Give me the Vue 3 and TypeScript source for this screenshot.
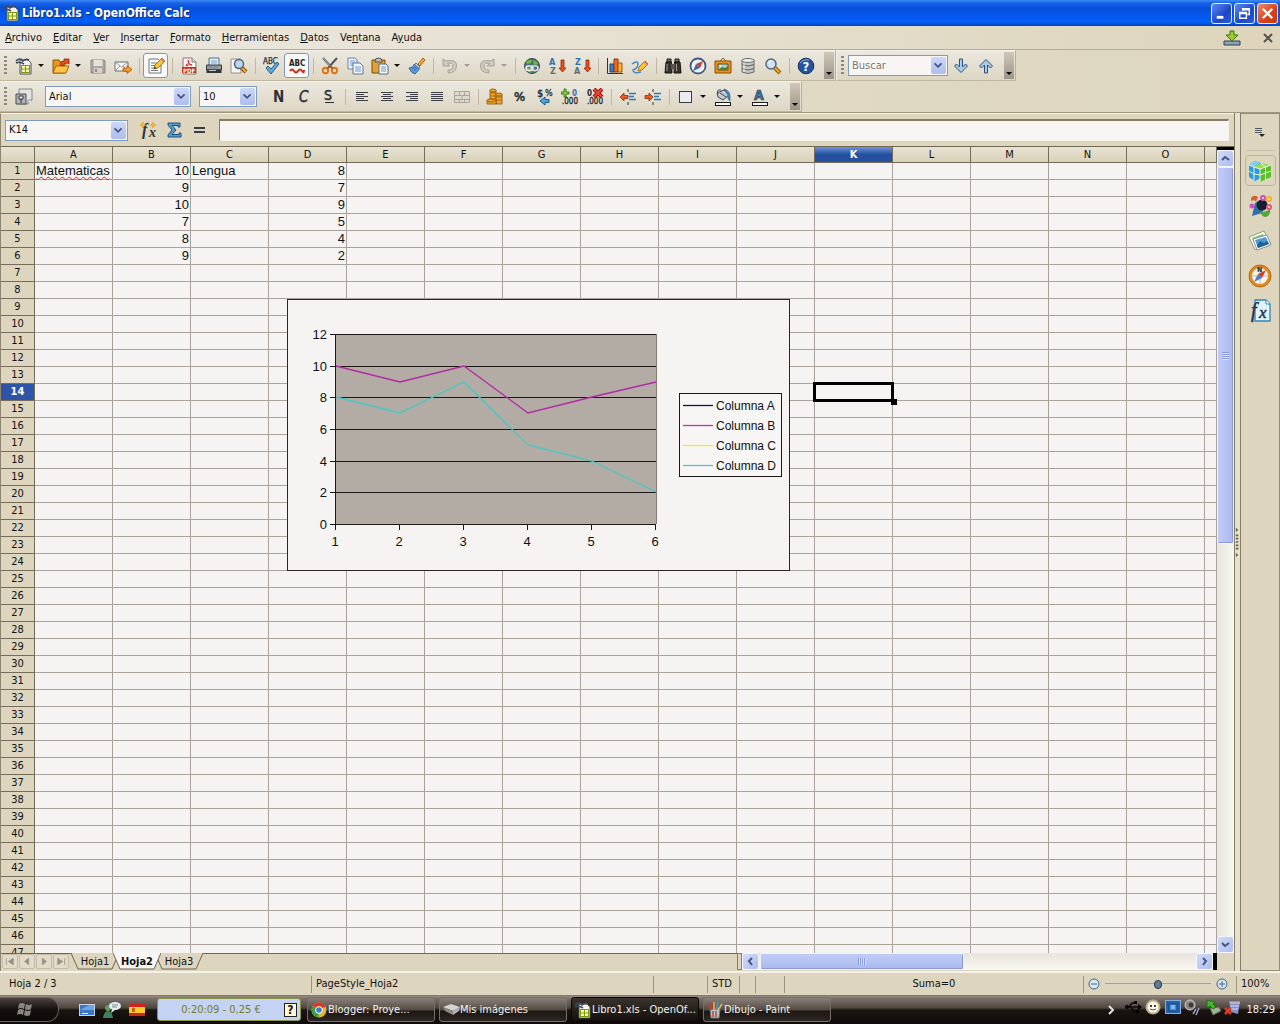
<script setup lang="ts">
import { ref } from 'vue'

interface Tool {
  kind: 'icon' | 'menu' | 'sep'
  icon?: string
  label?: string
  on?: boolean
  off?: boolean
}

const icon = (name: string, label: string, extra: Partial<Tool> = {}): Tool => ({ kind: 'icon', icon: name, label, ...extra })
const menu = (label: string, off = false): Tool => ({ kind: 'menu', label, off })
const sep: Tool = { kind: 'sep' }

const sans = 'font-family="DejaVu Sans Condensed, sans-serif"'
const calcDoc =
  '<path d="M5 3h8l3 3v11H5z" fill="#f4f4f0" stroke="#4b4f55"/><path d="M1 4q4-4 7 0q3-3 6-1M1 6q4-2 8 1" fill="none" stroke="#3f4b5c" stroke-width="1.6"/><rect x="6.500" y="8.500" width="8" height="7" fill="#f5fbb0" stroke="#7f9a10"/><path d="M10.500 8v8M6 12h9" stroke="#7f9a10"/>'
const doc = '<path d="M2 2h9l3 3v11H2z" fill="#fbfbf8" stroke="#6d7683"/>'
const lens =
  '<path d="M10 10l6 6" stroke="#8a5b10" stroke-width="4"/><path d="M10.500 10.500l5 5" stroke="#f2a520" stroke-width="2"/><circle cx="7" cy="7" r="5" fill="#cfe3f6" stroke="#51687f" stroke-width="1.500"/><path d="M4 7q0-3 3-3" stroke="#fff" fill="none"/>'
const lines = (d: string) => `<path d="${d}" stroke="#3c4044" stroke-width="1" fill="none"/>`
const arrowDown = '<path d="M13 3h3v8h2l-3.500 4-3.500-4h2z" fill="#e8501c" stroke="#8c2808" stroke-width=".8"/>'
const blueArrow = 'M7.500 2h3v8l3-3 2 2-6.500 6.500L2.500 9l2-2 3 3z'

const art: Record<string, string> = {
  calc: calcDoc,
  open: '<path d="M1 3h6l1 2h5v11H1z" fill="#e59a12" stroke="#8d5206"/><path d="M1 16l3-7h13l-3 7z" fill="#fdc445" stroke="#a7650b"/><path d="M8 8q0-4 4-4V2h5v5l-2-1q-4 0-4 3z" fill="#e5501e" stroke="#8f2a08" stroke-width=".8"/>',
  save: '<path d="M2 3h13l1 1v12H2z" fill="#aaa6a0" stroke="#8e8a84"/><path d="M4.500 3h9v6h-9z" fill="#e4e1da"/><path d="M5 11h8v5H5z" fill="#d5d1ca"/><path d="M7 12v3" stroke="#8e8a84" stroke-width="2"/>',
  mail: '<path d="M1 5h13v9H1z" fill="#f5f4f0" stroke="#6a7078"/><path d="M1 5l6.500 5L14 5M1 14l5-5M14 14l-5-5" fill="none" stroke="#7c848e" stroke-width=".8"/><path d="M9 11h4V8.500l5 4-5 4V14H9z" fill="#f59b28" stroke="#a4540a" stroke-width=".8"/>',
  edit: doc + '<path d="M4 6h6M4 8.500h5M4 11h4M4 13.500h7" stroke="#6e7c8b"/><path d="M7 12l1-4 7-7 3 3-7 7z" fill="#fbc535" stroke="#8a6008" stroke-width=".8"/><path d="M13.500 2.500L15 1l3 3-1.500 1.500z" fill="#e87884"/><path d="M7 12l.7-2.500 1.800 1.800z" fill="#333"/>',
  pdf: '<path d="M3 1h9l4 4v12H3z" fill="#f8f4f2" stroke="#7f7a78"/><path d="M12 1v4h4" fill="#ddd" stroke="#7f7a78"/><path d="M6 8q3-1 3-4-1-2-1 0 1 4 4 4-3-1-6 1z" stroke="#cf2e2e" fill="none"/><rect x="2" y="10" width="14" height="6" fill="#c62828"/><text x="3" y="15.500" font-size="6" font-weight="bold" fill="#fff" ' + sans + '>PDF</text>',
  print: '<path d="M4 1h10v8H4z" fill="#dfeefa" stroke="#54708c"/><path d="M6 4h6M6 6h6" stroke="#7fa3c4"/><path d="M1.500 8h15v5h-15z" fill="#8d939a" stroke="#3a3f45"/><path d="M1.500 12.500h15v3.500h-15z" fill="#33363b"/><path d="M4 13.500h7" stroke="#c5c9cc"/><path d="M13 10.500h2" stroke="#7be03a" stroke-width="1.500"/>',
  preview: '<path d="M1 2h10v14H1z" fill="#f5f4f1" stroke="#98928a"/><path d="M11 10l5 5" stroke="#805010" stroke-width="4"/><path d="M11 10l5 5" stroke="#f4ac28" stroke-width="2"/><circle cx="9" cy="7" r="4.500" fill="#bcd4ec" stroke="#4f677f" stroke-width="1.500"/>',
  spell: '<text x="0" y="7" font-size="8" fill="#33373c" stroke="#33373c" stroke-width=".3" ' + sans + '>ABC</text><path d="M3 11l2-2 3 3 6-7 2 2-8 10z" fill="#5ea9de" stroke="#1f547f" stroke-width=".9"/>',
  autospell: '<text x="1" y="9" font-size="8" font-weight="bold" fill="#222" ' + sans + '>ABC</text><path d="M2 14q2-3 4 0t4 0 4 0 2-1" fill="none" stroke="#d4281c" stroke-width="2"/>',
  cut: '<path d="M2 1l9 10M16 1L7 11" stroke="#4d5560" stroke-width="2"/><path d="M2 1l8 9" stroke="#cfd3d8" stroke-width=".8"/><circle cx="4.500" cy="13.500" r="2.700" fill="none" stroke="#e0751a" stroke-width="2"/><circle cx="13.500" cy="13.500" r="2.700" fill="none" stroke="#e0751a" stroke-width="2"/><path d="M6 12l3-3 3 3" fill="none" stroke="#b8590c" stroke-width="1.500"/>',
  copy: '<path d="M2 1h7l2 2v9H2z" fill="#e8f1fa" stroke="#6b86a5"/><path d="M4 4h5M4 6h5M4 8h5" stroke="#6f9bd0"/><path d="M7 6h7l3 3v8H7z" fill="#f2f7fc" stroke="#5b7797"/><path d="M9 10h6M9 12h6M9 14h6" stroke="#6f9bd0"/>',
  paste: '<path d="M1 3h13v13H1z" fill="#e3a033" stroke="#7d4c08"/><path d="M4 4q0-3 3.500-3T11 4v1H4z" fill="#b9bdc0" stroke="#4f5256"/><path d="M8 7h7l2 2v8H8z" fill="#f1f6fb" stroke="#5b6f86"/><path d="M10 10h5M10 12h5M10 14h5" stroke="#7b9bc2"/>',
  brush: '<path d="M10 7l5-6 2 2-5 6z" fill="#f4a928" stroke="#8d5808" stroke-width=".8"/><path d="M8 6l4 4-2 2-4-4z" fill="#c9dcf0" stroke="#3a5c85" stroke-width=".8"/><path d="M6.500 7l5 5L7 17q-4-1-6-6 4 0 5.500-4z" fill="#5b9fe0" stroke="#234e84" stroke-width=".8"/><path d="M4 12l4-2M6 14l3-3" stroke="#234e84" stroke-width=".7"/>',
  undo: '<path d="M2 2v7h7L6.500 6.500Q12 5 12 9t-5 4v3q8 0 8.500-7T5 4z" fill="#cfcbc2" stroke="#a7a298"/>',
  redo: '<path d="M16 2v7H9l2.500-2.500Q6 5 6 9t5 4v3Q3 16 2.500 9T13 4z" fill="#cfcbc2" stroke="#a7a298"/>',
  link: '<circle cx="9" cy="9" r="7.500" fill="#456f86" stroke="#3b4c50"/><path d="M3 5q3-3 6-2l-1 3-4 1zM10 3q4 1 5 4l-4 1zM3 10l4 1 1 5q-4-1-5-6zM12 13l3-2q-1 3-4 5z" fill="#73b83c"/><rect x="3" y="9" width="7" height="4.500" rx="2.200" fill="none" stroke="#f1f1f1" stroke-width="1.600"/><rect x="8" y="9" width="7" height="4.500" rx="2.200" fill="none" stroke="#dcdcdc" stroke-width="1.600"/>',
  sortaz: '<text x="1" y="8" font-size="9" font-weight="bold" fill="#2b74b0" ' + sans + '>A</text><text x="2" y="17" font-size="9" font-weight="bold" fill="#686c70" ' + sans + '>Z</text>' + arrowDown,
  sortza: '<text x="2" y="8" font-size="9" font-weight="bold" fill="#2b74b0" ' + sans + '>Z</text><text x="1" y="17" font-size="9" font-weight="bold" fill="#686c70" ' + sans + '>A</text>' + arrowDown,
  chart: '<path d="M1.500 1v15.500H17" stroke="#333" fill="none"/><path d="M4 7h4v8H4z" fill="#3b80c4" stroke="#1d4572"/><path d="M8 2h4v13H8z" fill="#ee6a22" stroke="#8c3208"/><path d="M12 6h4v9h-4z" fill="#f9b23a" stroke="#975a0a"/>',
  draw: '<path d="M1 7q6-4 6 0T2 13q0 4 8 2" stroke="#4a86c8" stroke-width="1.500" fill="none"/><path d="M7 14l1-4 6-6 3 3-6 6z" fill="#fbc535" stroke="#8a6008" stroke-width=".8"/><path d="M13 5l1-1 3 3-1 1z" fill="#e06a6e"/>',
  find: '<path d="M3 2h4v3H3zM11 2h4v3h-4z" fill="#77706a" stroke="#1f1c1a"/><path d="M2 5h5.500l.5 11H1zM10.500 5H16l1 11h-7z" fill="#37322e" stroke="#16130f"/><path d="M7 7h4v5H7z" fill="#5a534d"/><path d="M3 7v7M12.500 7v7" stroke="#a59b90"/>',
  compass: '<circle cx="9" cy="9" r="7.500" fill="#eef3f8" stroke="#45597a" stroke-width="1.800"/><path d="M14 4l-3 7-4-4z" fill="#d9382a"/><path d="M4 14l3-7 4 4z" fill="#3a6db0"/>',
  gallery: '<path d="M5 5l4-4 4 4" fill="none" stroke="#7c5a22"/><path d="M1 4h16v12H1z" fill="#e5941e" stroke="#8c4d06"/><path d="M4 7h10v6H4z" fill="#9cd3ec" stroke="#774206"/><path d="M4 13l4-3 3 1 3-2v4z" fill="#3c8a2c"/><circle cx="6.500" cy="9" r="1" fill="#fff38a"/>',
  data: '<path d="M3 3v12q6 3 12 0V3z" fill="#c5c5c3" stroke="#6c6c6a"/><ellipse cx="9" cy="3.500" rx="6" ry="2" fill="#ededeb" stroke="#6c6c6a"/><path d="M3 7.500q6 3 12 0M3 11.500q6 3 12 0" fill="none" stroke="#5f5f5d"/><path d="M5 6v9" stroke="#f4f4f2"/>',
  zoom: lens,
  help: '<circle cx="9" cy="9" r="7.800" fill="#27549c" stroke="#142e66"/><path d="M3 6q3-4 9-3" stroke="#8fb1e4" fill="none"/><text x="5.500" y="14" font-size="13" font-weight="bold" fill="#fff" ' + sans + '>?</text>',
  styles: '<path d="M4 1h13v11l-4 4H4z" fill="#e5e4e2" stroke="#85868a"/><path d="M13 16v-4h4" fill="#fff" stroke="#85868a"/><path d="M1 6h10v10H1z" fill="#aeb1b5" stroke="#4b4f55"/><path d="M4 8h4v3H4zM6 11v4" fill="#f2f2f2" stroke="#33363b"/>',
  bold: '<text x="3" y="14" font-size="15" font-weight="bold" fill="#2c2f33" ' + sans + '>N</text>',
  italic: '<text x="4" y="14" font-size="15" font-style="italic" fill="#2c2f33" stroke="#2c2f33" stroke-width=".4" ' + sans + '>C</text>',
  under: '<text x="4" y="12" font-size="14" fill="#2c2f33" stroke="#2c2f33" stroke-width=".5" ' + sans + '>S</text><path d="M5 14.500h9" stroke="#2c2f33"/>',
  left: lines('M3 4.500h12M3 6.500h8M3 8.500h12M3 10.500h8M3 12.500h12'),
  center: lines('M3 4.500h12M5 6.500h8M3 8.500h12M5 10.500h8M3 12.500h12'),
  right: lines('M3 4.500h12M7 6.500h8M3 8.500h12M7 10.500h8M3 12.500h12'),
  justify: lines('M3 4.500h12M3 6.500h12M3 8.500h12M3 10.500h12M3 12.500h12'),
  merge: '<path d="M1.500 3.500h15v11h-15zM1 7.500h16M1 11.500h16M6.500 3v4M11.500 3v4M6.500 11v4M11.500 11v4M9 7v4" fill="#dedad0" stroke="#aaa59a"/>',
  coins: '<g fill="#f0a62a" stroke="#87500a" stroke-width=".8"><path d="M4 2h6v9H4z"/><ellipse cx="7" cy="2.500" rx="3" ry="1.500"/><path d="M10 6h6v10h-6z"/><ellipse cx="13" cy="6.500" rx="3" ry="1.500"/><path d="M1 12h9v4H1z"/><ellipse cx="5" cy="12.500" rx="4" ry="1.500"/></g><path d="M4 5h6M4 8h6M10 9h6M10 12h6" stroke="#87500a" stroke-width=".7"/>',
  percent: '<text x="3" y="13" font-size="13" fill="#303338" stroke="#303338" stroke-width=".6" ' + sans + '>%</text>',
  currency: '<text x="1" y="9" font-size="10" font-weight="bold" fill="#303338" ' + sans + '>$</text><text x="9" y="8" font-size="9" fill="#303338" stroke="#303338" stroke-width=".3" ' + sans + '>%</text><path d="M13 11.500H9V9l-5 4 5 4v-2.500h4z" fill="#4fa3dd" stroke="#1d4f80" stroke-width=".9"/>',
  adddec: '<path d="M3 1h2v3h3v2H5v3H3V6H0V4h3z" fill="#8bd43a" stroke="#2e7a0c" stroke-width=".9"/><text x="11" y="8" font-size="8" font-weight="bold" fill="#3a6fb8" ' + sans + '>0</text><text x="1" y="16" font-size="8" fill="#26292d" stroke="#26292d" stroke-width=".3" ' + sans + '>.000</text>',
  deldec: '<text x="1" y="8" font-size="8" font-weight="bold" fill="#26292d" ' + sans + '>0</text><text x="1" y="16" font-size="8" fill="#26292d" stroke="#26292d" stroke-width=".3" ' + sans + '>.000</text><path d="M8 1l8 8M16 1l-8 8" stroke="#921812" stroke-width="4"/><path d="M8 1l8 8M16 1l-8 8" stroke="#ec4438" stroke-width="2"/>',
  outdent: '<path d="M9 1v3M9 14v3" stroke="#333"/><path d="M10 5.500h7M10 8.500h5M10 11.500h7" stroke="#2e7bb8" stroke-width="1.500"/><path d="M9 7.500H5V5L1 9l4 4v-2.500h4z" fill="#ef5a20" stroke="#8c2808" stroke-width=".8"/>',
  indent: '<path d="M9 1v3M9 14v3" stroke="#333"/><path d="M10 5.500h7M10 8.500h5M10 11.500h7" stroke="#2e7bb8" stroke-width="1.500"/><path d="M1 7.500h4V5l4 4-4 4v-2.500H1z" fill="#ef5a20" stroke="#8c2808" stroke-width=".8"/>',
  border: '<rect x="2.500" y="3.500" width="12" height="11" fill="#e9ebf0" stroke="#3a3d42"/>',
  fill: '<path d="M3 5l7-3 5 5-6 5-5-3z" fill="#c2cbd3" stroke="#3d464f"/><path d="M4 6q-2-5 3-4M6 5l6 4" fill="none" stroke="#3d464f"/><path d="M10 1q7 1 6 12-3-2-2-6z" fill="#4590c8" stroke="#23608e" stroke-width=".7"/><rect x="1.500" y="14.500" width="15" height="3" fill="#fff" stroke="#1c1c1c"/>',
  fontcolor: '<text x="3" y="12" font-size="14" font-weight="bold" fill="#43749c" stroke="#223f58" stroke-width=".7" ' + sans + '>A</text><rect x="1.500" y="14.500" width="15" height="3" fill="#fff" stroke="#1c1c1c"/>',
  down: '<path d="' + blueArrow + '" fill="#a9cbe8" stroke="#2a4f78"/>',
  up: '<path transform="rotate(180 9 9)" d="' + blueArrow + '" fill="#a9cbe8" stroke="#2a4f78"/>',
  fx: '<text x="2" y="14" font-size="16" font-style="italic" font-weight="bold" fill="#2f3438" font-family="Liberation Serif, serif">f</text><text x="9" y="16" font-size="14" font-style="italic" font-weight="bold" fill="#2f3438" font-family="Liberation Serif, serif">x</text><path d="M3 1l1 2 2 1-2 1-1 2-1-2-2-1 2-1zM13 1l1 2 2 1-2 1-1 2-1-2-2-1 2-1zM8 0v2" fill="#f7b42c" stroke="#d98d10" stroke-width=".4"/>',
  sum: '<path d="M3 2h12v4h-2V4.500H7l4 4.500-4 4.500h7V12h2v4H3v-2l4-5-4-5z" fill="#4e9fd6" stroke="#1c456e" stroke-width=".9"/>',
  equals: '<path d="M4 7h11M4 11h11" stroke="#3a3d40" stroke-width="2"/>',
  update: '<path d="M1 12h16v4H1z" fill="#8ba3b8" stroke="#2f4151"/><path d="M7 2h4v4h4l-6 6-6-6h4z" fill="#9ccc2c" stroke="#3f7408"/>',
  desktop: '<rect x="1.500" y="3.500" width="15" height="11" fill="#3f77c8" stroke="#c8d4e4"/><path d="M2 9l9-5h5v5z" fill="#6fa2e4"/><path d="M4 12.500h6" stroke="#e8eef6"/>',
  talk: '<circle cx="5" cy="7" r="3" fill="#629c5c"/><path d="M0 17q1-7 5-7t5 7z" fill="#3f8060"/><ellipse cx="12" cy="5" rx="6" ry="4" fill="#e8ecf0"/><path d="M9 8l-1 4 4-3z" fill="#e8ecf0"/><path d="M9 4h6M9 6h5" stroke="#7b8791"/>',
  spain: '<path d="M1 3h16v12H1z" fill="#d4221c"/><path d="M1 6h16v6H1z" fill="#fbc92c"/><path d="M4 7h3v4H4z" fill="#c46a20"/>',
  chrome: '<circle cx="9" cy="9" r="7.500" fill="#e4b820"/><path d="M9 9L2.500 5.200A7.500 7.500 0 0 1 15.500 5.500z" fill="#d83a28"/><path d="M9 9l-6.500-3.800A7.500 7.500 0 0 0 8.500 16.500z" fill="#3f9e45"/><circle cx="9" cy="9" r="3.800" fill="#f4f4f4"/><circle cx="9" cy="9" r="2.800" fill="#3c7bd0"/>',
  drive: '<path d="M1 6l8-3 9 3-7 4z" fill="#d6d4d0"/><path d="M1 6l10 4v4L3 10z" fill="#8b8783"/><path d="M11 10l7-4-1 4-6 4z" fill="#b4b0ac"/>',
  paint: '<path d="M4 8h10l-1 9H5z" fill="#b5c3cc" stroke="#6a747c"/><path d="M6 9L3 2" stroke="#d43c28" stroke-width="2"/><path d="M8 9V1" stroke="#e89a28" stroke-width="2"/><path d="M10 9l2-8" stroke="#4a94d4" stroke-width="2"/><path d="M12 9l4-6" stroke="#d8b060" stroke-width="2"/><path d="M7 10v6M10 10v6" stroke="#b84830" stroke-width="1.500"/>',
  usb: '<path d="M2 8h13M5 8l3-4h3M7 8l3 5h3" stroke="#0a0908" stroke-width="1.500" fill="none"/><circle cx="3" cy="8" r="2"/><path d="M14 5l4 3-4 3zM10 2h3v3h-3zM12 11h3v3h-3z"/>',
  monkey: '<circle cx="9" cy="8" r="7.500" fill="#b9b08a"/><circle cx="9" cy="8" r="5.500" fill="#fbf7ec"/><circle cx="7" cy="7" r="1"/><circle cx="11" cy="7" r="1"/><path d="M6 10q3 2 6 0" stroke="#555" fill="none"/>',
  bluetool: '<rect x="1.500" y="1.500" width="15" height="13" fill="#2562ad" stroke="#87aedc"/><path d="M5 5h8v7H5z" fill="#3f8bdb" stroke="#123f7c"/><path d="M7 7h4M7 9h4" stroke="#cde4fa"/>',
  sound: '<circle cx="6" cy="6" r="5" fill="#8b8986" stroke="#d0cecb"/><circle cx="7" cy="6" r="2.500" fill="#3d3b39"/><path d="M12 10l-3 5M15 9l-3 7" stroke="#9b9cc8" stroke-width="1.500"/>',
  eject: '<path d="M6 9l9-1 2 4-8 4z" fill="#a6b09d" stroke="#5b6454"/><path d="M3 1l8 2-2 2 3 3-3 2-3-3-3 2z" fill="#3fb728" stroke="#166a0c" stroke-width=".8"/>',
  network: '<path d="M5 2h11l-2 13-7-2z" fill="#8a91c4"/><path d="M6 4h10M6 7h9M7 10h7" stroke="#d3d7f2"/><path d="M1 9l6 6M7 9l-6 6" stroke="#e23c28" stroke-width="2.500"/>',
  props:
    '<path d="M1 6l6-4 6 2v15l-6 3-6-4z" fill="#2b9cdc"/><path d="M12 10l11-4v12l-11 5z" fill="#5bbf2c"/><path d="M1 6l6-4 5 2-6 4z" fill="#7fd0f4"/><path d="M6 8l7-4 10 2-11 4z" fill="#9ade4c"/><path d="M1 12l5 3 6 1 11-4M6 8v13M12 10v13M17.500 8v13M1 6l5 2 6 2 11-4M13 4l4 4" stroke="#e9f7e0" fill="none"/>',
  stylist:
    '<path d="M4 22l3-13q7-5 11 1l-4 9z" fill="#2f6fae"/><circle cx="14" cy="11" r="5.500" fill="#15202c"/><path d="M12 18q5 1 10-3 1 6-4 8-4 0-6-5z" fill="#57a53c"/><path d="M3 4q3-4 7-1l-2 5q-1-3-5-1z" fill="#d8622c"/><g fill="#cf4fc0"><circle cx="15" cy="4" r="3"/><circle cx="4" cy="12" r="2.500"/></g><circle cx="21" cy="5" r="3" fill="#f6ac2c"/><circle cx="21" cy="13" r="3" fill="#e3508c"/><g fill="#fff2a0"><circle cx="15" cy="4" r="1"/><circle cx="21" cy="5" r="1"/><circle cx="21" cy="13" r="1"/></g>',
  pictures:
    '<path d="M1 8l15-6 6 12-15 7z" fill="#fbfbf6" stroke="#8da07c"/><path d="M4 9l11-4 4 8-11 5z" fill="#7fc26c"/><path d="M5 10l14-4 4 10-14 5z" fill="#fff" stroke="#8a9298"/><path d="M7 11l11-3 3 7-11 4z" fill="#4f9ad4"/><path d="M9 16l3-4 4 2 3-2 2 3-11 4z" fill="#255f94"/>',
  navigator:
    '<circle cx="12" cy="12" r="9.500" fill="#f4f3ee" stroke="#e28a1a" stroke-width="3"/><circle cx="12" cy="12" r="11" fill="none" stroke="#a65c0c" stroke-width=".8"/><path d="M12 4v16M4 12h16" stroke="#9aa8b8" stroke-width=".7"/><path d="M18 6l-4 8-4-4z" fill="#d23a2c"/><path d="M6 18l4-8 4 4z" fill="#4c7fc0"/><text x="9" y="8" font-size="7" font-weight="bold" fill="#222" ' + sans + '>N</text>',
  functions:
    '<path d="M7 1h11l4 4v17H7z" fill="#e2f2fb" stroke="#2d86b8" stroke-width="1.300"/><path d="M18 1v4h4" fill="#fff" stroke="#2d86b8"/><text x="3" y="18" font-size="20" font-style="italic" fill="#22384c" stroke="#22384c" stroke-width=".5" font-family="Liberation Serif, serif">f</text><text x="11" y="19" font-size="17" font-style="italic" fill="#22384c" stroke="#22384c" stroke-width=".5" font-family="Liberation Serif, serif">x</text>',
}

const menus: [string, string, string][] = [
  ['', 'A', 'rchivo'],
  ['', 'E', 'ditar'],
  ['', 'V', 'er'],
  ['', 'I', 'nsertar'],
  ['', 'F', 'ormato'],
  ['', 'H', 'erramientas'],
  ['', 'D', 'atos'],
  ['Ve', 'n', 'tana'],
  ['A', 'y', 'uda'],
]

const standard: Tool[] = [
  icon('calc', 'Nuevo'), menu('Nuevo'), icon('open', 'Abrir'), menu('Abrir'), icon('save', 'Guardar', { off: true }), icon('mail', 'Enviar'), sep,
  icon('edit', 'Editar archivo', { on: true }), sep,
  icon('pdf', 'Exportar a PDF'), icon('print', 'Imprimir'), icon('preview', 'Vista preliminar'), sep,
  icon('spell', 'Ortografía'), icon('autospell', 'Revisión automática', { on: true }), sep,
  icon('cut', 'Cortar'), icon('copy', 'Copiar'), icon('paste', 'Pegar'), menu('Pegar'), icon('brush', 'Copiar formato'), sep,
  icon('undo', 'Deshacer', { off: true }), menu('Deshacer', true), icon('redo', 'Restaurar', { off: true }), menu('Restaurar', true), sep,
  icon('link', 'Hiperenlace'), icon('sortaz', 'Orden ascendente'), icon('sortza', 'Orden descendente'), sep,
  icon('chart', 'Gráfico'), icon('draw', 'Dibujo'), sep,
  icon('find', 'Buscar y reemplazar'), icon('compass', 'Navegador'), icon('gallery', 'Galería'), icon('data', 'Fuentes de datos'), icon('zoom', 'Zoom'), sep,
  icon('help', 'Ayuda'),
]

const format: Tool[] = [
  icon('bold', 'Negrita'), icon('italic', 'Cursiva'), icon('under', 'Subrayado'), sep,
  icon('left', 'Izquierda'), icon('center', 'Centrado'), icon('right', 'Derecha'), icon('justify', 'Justificado'), icon('merge', 'Combinar', { off: true }), sep,
  icon('coins', 'Moneda'), icon('percent', 'Porcentaje'), icon('currency', 'Predeterminado'), icon('adddec', 'Añadir decimal'), icon('deldec', 'Eliminar decimal'), sep,
  icon('outdent', 'Reducir sangría'), icon('indent', 'Aumentar sangría'), sep,
  icon('border', 'Bordes'), menu('Bordes'), icon('fill', 'Color de fondo'), menu('Color de fondo'), icon('fontcolor', 'Color de fuente'), menu('Color de fuente'),
]

const columns = 'ABCDEFGHIJKLMNO'.split('')
const rowCount = 47
const cells: Record<string, string> = { A1: 'Matematicas', C1: 'Lengua' }
const mathGrades = [10, 9, 10, 7, 8, 9]
const languageGrades = [8, 7, 9, 5, 4, 2]
mathGrades.forEach((v, i) => (cells[`B${i + 1}`] = String(v)))
languageGrades.forEach((v, i) => (cells[`D${i + 1}`] = String(v)))
const isNumber = (key: string) => /^\d+$/.test(cells[key] ?? '')

const px = (i: number) => 50 + i * 64
const py = (v: number) => Math.round(225 - (v * 190) / 12)
const points = (values: number[]) => values.map((v, i) => `${px(i)},${py(v)}`).join(' ')
const ticks = [0, 2, 4, 6, 8, 10, 12]
const legend = [
  { name: 'Columna A', color: '#101050' },
  { name: 'Columna B', color: '#c030b8' },
  { name: 'Columna C', color: '#ece83c' },
  { name: 'Columna D', color: '#40d0d0' },
]

const sheetNav = ['M3.500 4v8M12 4v8L6 8z', 'M10 4v8L5 8z', 'M6 4v8l5-4z', 'M4 4v8l6-4zM12.500 4v8']
const sheets = ['Hoja1', 'Hoja2', 'Hoja3']
const activeSheet = ref('Hoja2')
const zoomLevel = ref(50)
const panels = [
  ['props', 'Propiedades'],
  ['stylist', 'Estilos'],
  ['pictures', 'Galería'],
  ['navigator', 'Navegador'],
  ['functions', 'Funciones'],
]
const tasks = [
  ['chrome', 'Blogger: Proye...'],
  ['drive', 'Mis imágenes'],
  ['calc', 'Libro1.xls - OpenOf...'],
  ['paint', 'Dibujo - Paint'],
]
const tray = ['usb', 'monkey', 'bluetool', 'sound', 'eject', 'network']
</script>

<template>
  <div class="screen">
    <header class="title">
      <svg class="ic" viewBox="0 0 18 18" v-html="art.calc" />
      <h1>Libro1.xls - OpenOffice Calc</h1>
      <button class="win" aria-label="Minimizar"><svg viewBox="0 0 20 20"><path d="M5 14h7" stroke="#fff" stroke-width="3" /></svg></button>
      <button class="win" aria-label="Restaurar"><svg viewBox="0 0 20 20"><path d="M8 7V5h7v6h-2M8 6h7M5 9h7v6H5zM5 10h7" fill="none" stroke="#fff" stroke-width="1.5" /></svg></button>
      <button class="win close" aria-label="Cerrar"><svg viewBox="0 0 20 20"><path d="M5 5l10 10M15 5L5 15" stroke="#fff" stroke-width="2.5" /></svg></button>
    </header>

    <nav class="menubar">
      <a v-for="m in menus" :key="m[1]" href="#">{{ m[0] }}<u>{{ m[1] }}</u>{{ m[2] }}</a>
      <button class="tool update" aria-label="Actualizaciones"><svg class="ic" viewBox="0 0 18 18" v-html="art.update" /></button>
      <button class="tool" aria-label="Cerrar documento"><svg class="ic" viewBox="0 0 18 18"><path d="M5 5l8 8M13 5l-8 8" stroke="#55524c" stroke-width="2" /></svg></button>
    </nav>

    <div class="bars">
      <div class="bar">
        <i class="grip" />
        <template v-for="(t, i) in standard" :key="i">
          <i v-if="t.kind === 'sep'" class="sep" />
          <button v-else-if="t.kind === 'menu'" class="drop" :class="{ off: t.off }" :aria-label="t.label + ', opciones'"><i /></button>
          <button v-else class="tool" :class="{ on: t.on }" :aria-label="t.label"><svg class="ic" viewBox="0 0 18 18" v-html="art[t.icon!]" /></button>
        </template>
        <button class="more" aria-label="Más botones"><i /></button>
      </div>
      <div class="bar">
        <i class="grip" />
        <div class="combo search">
          <input type="text" placeholder="Buscar" aria-label="Buscar" />
          <svg viewBox="0 0 17 17"><path d="M4 6l4 4 4-4" /></svg>
        </div>
        <button class="tool" aria-label="Siguiente"><svg class="ic" viewBox="0 0 18 18" v-html="art.down" /></button>
        <button class="tool" aria-label="Anterior"><svg class="ic" viewBox="0 0 18 18" v-html="art.up" /></button>
        <button class="more" aria-label="Más botones de búsqueda"><i /></button>
      </div>
    </div>

    <div class="bars second">
      <div class="bar">
        <i class="grip" />
        <button class="tool" aria-label="Estilo y formato"><svg class="ic" viewBox="0 0 18 18" v-html="art.styles" /></button>
        <div class="combo font">
          <select aria-label="Fuente"><option>Arial</option></select>
          <svg viewBox="0 0 17 17"><path d="M4 6l4 4 4-4" /></svg>
        </div>
        <div class="combo size">
          <select aria-label="Tamaño"><option>10</option></select>
          <svg viewBox="0 0 17 17"><path d="M4 6l4 4 4-4" /></svg>
        </div>
        <template v-for="(t, i) in format" :key="i">
          <i v-if="t.kind === 'sep'" class="sep" />
          <button v-else-if="t.kind === 'menu'" class="drop" :aria-label="t.label + ', opciones'"><i /></button>
          <button v-else class="tool" :aria-label="t.label"><svg class="ic" viewBox="0 0 18 18" v-html="art[t.icon!]" /></button>
        </template>
        <button class="more" aria-label="Más formato"><i /></button>
      </div>
    </div>

    <div class="work">
      <main class="sheet">
        <div class="formula">
          <div class="combo name">
            <select aria-label="Celda"><option>K14</option></select>
            <svg viewBox="0 0 17 17"><path d="M4 6l4 4 4-4" /></svg>
          </div>
          <button class="tool" aria-label="Asistente de funciones"><svg class="ic" viewBox="0 0 18 18" v-html="art.fx" /></button>
          <button class="tool" aria-label="Suma"><svg class="ic" viewBox="0 0 18 18" v-html="art.sum" /></button>
          <button class="tool" aria-label="Función"><svg class="ic" viewBox="0 0 18 18" v-html="art.equals" /></button>
          <input type="text" class="entry" aria-label="Línea de entrada" />
        </div>

        <div class="body">
          <div class="grid">
            <table>
              <colgroup>
                <col class="rowcol" />
                <col v-for="c in columns" :key="c" class="datacol" />
                <col />
              </colgroup>
              <thead>
                <tr>
                  <th />
                  <th v-for="c in columns" :key="c" scope="col" :class="{ current: c === 'K' }">{{ c }}</th>
                  <th />
                </tr>
              </thead>
              <tbody>
                <tr v-for="r in rowCount" :key="r">
                  <th scope="row" :class="{ current: r === 14 }">{{ r }}</th>
                  <td v-for="c in columns" :key="c" :class="{ num: isNumber(c + r), cursor: c + r === 'K14', typo: c + r === 'A1' }"><span v-if="cells[c + r]">{{ cells[c + r] }}</span></td>
                  <td />
                </tr>
              </tbody>
            </table>

            <svg class="chart" viewBox="0 0 504 272" role="img" aria-label="Gráfico de líneas">
              <rect x="1.5" y="0.5" width="502" height="271" fill="#f5f4f2" stroke="#2e2624" />
              <rect x="50" y="35" width="320" height="190" fill="#b3aca5" />
              <path d="M370.5 35v190" stroke="#847c76" />
              <g stroke="#1c1816">
                <path v-for="t in ticks" :key="t" :d="`M44 ${py(t) + 0.5}h326`" />
                <path v-for="n in 6" :key="n" :d="`M${px(n - 1) - 0.5} 225v6`" />
                <path d="M49.5 35v190" />
              </g>
              <polyline :points="points(mathGrades)" fill="none" stroke="#b429a4" stroke-width="1.3" />
              <polyline :points="points(languageGrades)" fill="none" stroke="#44c8c8" stroke-width="1.3" />
              <text v-for="t in ticks" :key="'y' + t" x="41" :y="py(t) + 5" text-anchor="end">{{ t }}</text>
              <text v-for="n in 6" :key="'x' + n" :x="px(n - 1) - 1" y="247" text-anchor="middle">{{ n }}</text>
              <rect x="393.5" y="94.5" width="102" height="83" fill="#f7f6f4" stroke="#1c1816" />
              <g v-for="(l, i) in legend" :key="l.name">
                <path :d="`M397 ${106.5 + i * 20}h30`" :stroke="l.color" stroke-width="1.3" />
                <text class="key" x="430" :y="111 + i * 20">{{ l.name }}</text>
              </g>
            </svg>
          </div>

          <div class="vscroll">
            <i class="split" />
            <button aria-label="Subir"><svg viewBox="0 0 15 15"><path d="M4 9l3-3 4 3" /></svg></button>
            <i class="thumb" />
            <i class="rest" />
            <button aria-label="Bajar"><svg viewBox="0 0 15 15"><path d="M4 6l3 3 4-3" /></svg></button>
          </div>
        </div>

        <div class="tabs">
          <div class="tabarea">
            <button v-for="(d, i) in sheetNav" :key="i" class="nav" :aria-label="'Desplazar hojas ' + (i + 1)"><svg viewBox="0 0 16 16"><path :d="d" fill="#999286" stroke="#999286" /></svg></button>
            <div class="names">
              <button v-for="s in sheets" :key="s" class="tab" :class="{ active: s === activeSheet }" @click="activeSheet = s">
                <svg viewBox="0 0 48 17" preserveAspectRatio="none"><path d="M0 0l7 16h34l7-16" /></svg>
                <span>{{ s }}</span>
              </button>
            </div>
          </div>
          <div class="hscroll">
            <i class="handle" />
            <button aria-label="Izquierda"><svg viewBox="0 0 15 15"><path d="M9 4L6 7l3 4" /></svg></button>
            <i class="thumb" />
            <i class="rest" />
            <button aria-label="Derecha"><svg viewBox="0 0 15 15"><path d="M6 4l3 3-3 4" /></svg></button>
            <i class="split" />
          </div>
          <i class="corner" />
        </div>
      </main>

      <div class="splitter"><svg viewBox="0 0 6 36"><path d="M1 1v5l3-2.500zM1 31v5l3-2.500zM1 9h3v2H1zM1 13h3v2H1zM1 17h3v2H1zM1 21h3v2H1zM1 25h3v2H1z" fill="#68604e" /></svg></div>

      <aside class="side">
        <button class="sidemenu" aria-label="Configuración"><svg class="ic" viewBox="0 0 18 18"><path d="M4 5.500h7M4 7.500h7M4 9.500h7" stroke="#505a66" /><path d="M8 11h6l-3 3z" fill="#222" /></svg></button>
        <button v-for="(p, i) in panels" :key="p[0]" class="panel" :class="{ on: i === 0 }" :aria-label="p[1]"><svg viewBox="0 0 24 24" v-html="art[p[0]]" /></button>
      </aside>
    </div>

    <footer class="status">
      <span class="s1">Hoja 2 / 3</span>
      <span class="s2">PageStyle_Hoja2</span>
      <span class="s3" />
      <span class="s4">STD</span>
      <span class="s5" />
      <span class="s6" />
      <span class="s7">Suma=0</span>
      <span class="s8">
        <button class="round" aria-label="Reducir"><svg viewBox="0 0 12 12"><circle cx="6" cy="6" r="5" /><path d="M3 6h6" /></svg></button>
        <input v-model="zoomLevel" type="range" min="0" max="100" aria-label="Escala" />
        <button class="round" aria-label="Ampliar"><svg viewBox="0 0 12 12"><circle cx="6" cy="6" r="5" /><path d="M3 6h6M6 3v6" /></svg></button>
      </span>
      <span class="s9">100%</span>
    </footer>

    <div class="taskbar">
      <button class="start" aria-label="Inicio"><svg viewBox="0 0 20 18"><path d="M4 3q3-2 6 0l-1 5q-3-2-6 0zM11 3q3 2 6 0l-1 5q-3 2-6 0zM3 9q3-2 6 0l-1 5q-3-2-6 0zM10 9q3 2 6 0l-1 5q-3 2-6 0z" fill="#8a8580" /></svg></button>
      <div class="quick">
        <button v-for="q in ['desktop', 'talk', 'spain']" :key="q" class="tool" :aria-label="q"><svg class="ic" viewBox="0 0 18 18" v-html="art[q]" /></button>
      </div>
      <div class="timer"><span>0:20:09 - 0,25 €</span><b>?</b></div>
      <button v-for="(t, i) in tasks" :key="t[1]" class="task" :class="{ active: i === 2 }"><svg class="ic" viewBox="0 0 18 18" v-html="art[t[0]]" /><span>{{ t[1] }}</span></button>
      <div class="tray">
        <button class="chev" aria-label="Mostrar iconos"><svg viewBox="0 0 8 10"><path d="M1 1l4 4-4 4" fill="none" stroke="#e4e2de" stroke-width="2" /></svg></button>
        <svg v-for="t in tray" :key="t" class="ic" viewBox="0 0 18 18" v-html="art[t]" />
        <time>18:29</time>
      </div>
    </div>
  </div>
</template>

<style>
body {
  background: #dcd4bc;
}
</style>

<style scoped>
* {
  box-sizing: border-box;
}
.screen {
  display: flex;
  flex-direction: column;
  height: 100vh;
  overflow: hidden;
  background: #ddd5be;
  color: #111;
  font: 11px/14px "DejaVu Sans Condensed", "DejaVu Sans", sans-serif;
}
button,
input,
select {
  margin: 0;
  padding: 0;
  border: 0;
  border-radius: 0;
  background: none;
  color: inherit;
  font: inherit;
  outline: 0;
}
i {
  display: block;
}
.ic {
  display: block;
  width: 18px;
  height: 18px;
  flex: none;
}
.title {
  display: flex;
  align-items: center;
  gap: 2px;
  flex: none;
  height: 26px;
  padding: 0 2px 0 2px;
  background: linear-gradient(#3a8cf6 0, #1a62e8 3px, #0550da 8px, #0558ee 16px, #0560f8 22px, #0342b8 26px);
}
.title h1 {
  flex: 1;
  margin: 0;
  color: #fff;
  font-size: 12px;
  line-height: 16px;
  text-shadow: 1px 1px 1px #0a2a80;
}
.win {
  width: 21px;
  height: 21px;
  border: 1px solid #e6ecfa;
  border-radius: 3px;
  background: linear-gradient(135deg, #5c8af0, #1c46c8 60%, #2a5ce0);
}
.win svg {
  display: block;
}
.win.close {
  background: linear-gradient(135deg, #ee8a68, #d64018 60%, #c83c14);
}
.menubar {
  display: flex;
  align-items: center;
  gap: 11px;
  flex: none;
  height: 24px;
  padding: 0 0 0 5px;
  border-bottom: 1px solid #b5ab95;
  background: linear-gradient(90deg, #ebe8df, #e6e0d0 50%, #ddd4bb);
}
.menubar a {
  color: #111;
  text-decoration: none;
}
.menubar .update {
  margin-left: auto;
}
.bars {
  display: flex;
  flex: none;
  height: 31px;
  background: linear-gradient(90deg, #e4decb, #ded6be);
}
.bars.second {
  height: 32px;
  border-bottom: 1px solid #a0977f;
}
.bar {
  display: flex;
  align-items: center;
  padding: 0 1px 0 4px;
  border-top: 1px solid #f3f0e8;
  border-right: 1px solid #b9b099;
  border-bottom: 1px solid #c0b7a1;
  background: linear-gradient(#ebe8df, #ddd6c3);
}
.bar + .bar {
  border-left: 1px solid #f3f0e8;
}
.grip {
  width: 3px;
  height: 20px;
  margin-right: 4px;
  background: repeating-linear-gradient(#8f8878 0 2px, transparent 2px 4px);
}
.tool {
  display: flex;
  align-items: center;
  justify-content: center;
  flex: none;
  width: 25px;
  height: 25px;
}
.tool.on {
  border: 1px solid #7f97b8;
  border-radius: 3px;
  background: #f8f8f6;
}
.drop {
  flex: none;
  width: 12px;
  height: 25px;
}
.drop i {
  width: 6px;
  margin-left: 2px;
  border: 3px solid transparent;
  border-top-color: #111;
  border-bottom: 0;
}
.drop.off i {
  border-top-color: #a49e90;
}
.sep {
  flex: none;
  width: 1px;
  height: 16px;
  margin: 0 3px 0 4px;
  background: #c3b5a2;
}
.more {
  align-self: stretch;
  width: 10px;
  margin: 1px 0 1px 6px;
  padding: 16px 0 0 2px;
  background: linear-gradient(#cfc8b8, #9c9486);
}
.more i {
  width: 6px;
  border: 3px solid transparent;
  border-top-color: #000;
  border-bottom: 0;
}
.combo {
  display: flex;
  align-items: center;
  height: 21px;
  padding: 1px;
  border: 1px solid #7f9db9;
  background: #f7f6f4;
}
.combo select,
.combo input {
  flex: 1;
  min-width: 0;
  height: 17px;
  padding-left: 2px;
  appearance: none;
}
.combo input::placeholder {
  color: #7c7872;
  opacity: 1;
}
.combo svg {
  flex: none;
  width: 15px;
  height: 17px;
  border-radius: 2px;
  background: linear-gradient(#ccd6f8, #aebdf0);
}
.combo path,
.vscroll path,
.hscroll path {
  fill: none;
  stroke: #44547c;
  stroke-width: 2;
}
.combo.font {
  width: 146px;
  margin: 0 8px 0 9px;
}
.combo.size {
  width: 58px;
  margin-right: 9px;
}
.combo.search {
  width: 100px;
}
.work {
  display: flex;
  flex: 1;
  min-height: 0;
}
.sheet {
  display: flex;
  flex-direction: column;
  flex: 1;
  min-width: 0;
  border-top: 1px solid #f4f1e8;
  border-left: 1px solid #8d8571;
}
.formula {
  display: flex;
  align-items: center;
  flex: none;
  height: 32px;
  padding: 0 5px 0 4px;
}
.combo.name {
  width: 123px;
  margin-right: 8px;
}
.entry {
  flex: 1;
  height: 22px;
  margin-left: 8px;
  border: 1px solid #f4f2ea;
  border-top: 2px solid #857c66;
  border-left-color: #857c66;
  background: #f6f5f3;
}
.body {
  display: flex;
  flex: 1;
  min-height: 0;
  border-top: 1px solid #6f6754;
}
.grid {
  position: relative;
  flex: 1;
  min-width: 0;
  overflow: hidden;
  background: #f5f4f2;
}
table {
  width: 100%;
  table-layout: fixed;
  border-collapse: separate;
  border-spacing: 0;
}
.rowcol {
  width: 34px;
}
.datacol {
  width: 78px;
}
th,
td {
  height: 17px;
  padding: 0 1px;
  border-right: 1px solid #aaa39c;
  border-bottom: 1px solid #aaa39c;
  line-height: 14px;
  white-space: nowrap;
}
th {
  border-color: #746b58;
  background: #ddd5be;
  font-weight: normal;
}
thead th {
  height: 16px;
  background: linear-gradient(#e8e3d4, #d8d0b8);
}
th.current {
  background: #2c55a8;
  color: #fff;
  font-weight: bold;
}
thead th.current {
  background: linear-gradient(#6e94d8, #24509f 50%);
}
td {
  font: 13px/14px "Liberation Sans", Arial, sans-serif;
}
td.num {
  text-align: right;
}
td.typo span {
  text-decoration: underline wavy #d02c24 1px;
  text-underline-offset: 1px;
}
td.cursor {
  position: relative;
}
td.cursor::before {
  content: "";
  position: absolute;
  inset: -2px;
  border: 3px solid #000;
}
td.cursor::after {
  content: "";
  position: absolute;
  right: -5px;
  bottom: -5px;
  width: 6px;
  height: 6px;
  background: #000;
}
.chart {
  position: absolute;
  left: 285px;
  top: 152px;
  width: 504px;
  height: 272px;
}
.chart text {
  fill: #111;
  font: 13px "Liberation Sans", Arial, sans-serif;
}
.chart .key {
  font-size: 12px;
}
.vscroll {
  display: flex;
  flex-direction: column;
  flex: none;
  width: 17px;
  background: linear-gradient(90deg, #e6e4da, #f8f7f3);
}
.vscroll .split {
  flex: none;
  height: 3px;
  background: #000;
}
.vscroll button,
.hscroll button {
  flex: none;
  width: 17px;
  height: 17px;
  border: 1px solid #f4f6fe;
  border-radius: 3px;
  background: linear-gradient(135deg, #d0daf9, #aebcee);
}
.vscroll button svg,
.hscroll button svg {
  display: block;
  width: 15px;
  height: 15px;
}
.thumb {
  flex: 376;
  border: 1px solid #f0f3fe;
  border-radius: 2px;
  box-shadow: inset -1px -1px #8a9ad4;
}
.vscroll .thumb {
  background: repeating-linear-gradient(#8798dc 0 1px, #dce4fc 1px 2px) center / 7px 8px no-repeat, linear-gradient(90deg, #c0ccf7, #acb9ee);
}
.vscroll .rest {
  flex: 393;
}
.tabs {
  display: flex;
  flex: none;
  height: 18px;
}
.tabarea {
  display: flex;
  flex: 736;
  height: 17px;
  border-top: 1px solid #6f6754;
}
.nav {
  width: 16px;
  height: 15px;
  margin: 0 0 0 1px;
  border: 1px solid #c4bca6;
  border-radius: 2px;
  background: #e2dbc8;
}
.nav svg {
  display: block;
  width: 14px;
  height: 13px;
}
.names {
  display: flex;
  margin-left: 2px;
}
.tab {
  position: relative;
  width: 48px;
  height: 17px;
  margin-top: -1px;
  margin-right: -6px;
}
.tab svg {
  position: absolute;
  inset: 0;
  width: 100%;
  height: 17px;
}
.tab path {
  fill: #ddd5be;
  stroke: #6f6754;
}
.tab span {
  position: relative;
}
.tab.active {
  z-index: 1;
  font-weight: bold;
}
.tab.active path {
  fill: #f7f6f4;
}
.hscroll {
  display: flex;
  flex: 480;
  height: 17px;
  background: linear-gradient(#e6e4da, #f8f7f3);
}
.hscroll .handle {
  width: 5px;
  border: 1px solid #857c66;
  background: #ddd5be;
}
.hscroll .thumb {
  flex: 203;
  margin-left: 1px;
  background: repeating-linear-gradient(90deg, #8798dc 0 1px, #dce4fc 1px 2px) center / 8px 7px no-repeat, linear-gradient(#c0ccf7, #acb9ee);
}
.hscroll .rest {
  flex: 234;
}
.hscroll .split {
  width: 4px;
  background: #000;
}
.corner {
  flex: none;
  width: 17px;
}
.splitter {
  display: flex;
  align-items: center;
  flex: none;
  width: 7px;
  border-left: 1px solid #857c66;
  border-right: 1px solid #857c66;
  background: #e6e0cf;
}
.splitter svg {
  width: 5px;
  height: 36px;
}
.side {
  display: flex;
  flex-direction: column;
  align-items: center;
  flex: none;
  width: 39px;
  border: solid #958c77;
  border-width: 1px 1px 1px 0;
}
.sidemenu {
  display: flex;
  align-items: center;
  justify-content: center;
  width: 28px;
  height: 37px;
  margin-bottom: 4px;
  border-bottom: 1px solid #c9c0aa;
}
.panel {
  display: flex;
  align-items: center;
  justify-content: center;
  width: 31px;
  height: 31px;
  margin-bottom: 4px;
}
.panel.on {
  border: 1px solid #bdb49d;
  border-radius: 4px;
}
.panel svg {
  width: 24px;
  height: 24px;
}
.status {
  display: flex;
  align-items: center;
  flex: none;
  height: 24px;
  border-top: 2px solid #f4f1e8;
}
.status > span {
  display: flex;
  align-items: center;
  flex: none;
  height: 17px;
  padding-left: 4px;
  border-left: 1px solid #9e957f;
}
.status .s1 {
  flex: 1 1 311px;
  padding-left: 9px;
  border: 0;
}
.status .s2 {
  flex: 1 1 342px;
}
.status .s3 {
  width: 54px;
}
.status .s4 {
  width: 32px;
}
.status .s5 {
  width: 16px;
}
.status .s6 {
  width: 29px;
}
.status .s7 {
  flex: 1 1 299px;
  justify-content: center;
  padding: 0;
}
.status .s8 {
  width: 153px;
  gap: 5px;
  padding-right: 8px;
}
.status .s9 {
  width: 44px;
}
.round {
  flex: none;
  width: 12px;
  height: 12px;
}
.round svg {
  display: block;
  fill: #dbe8f4;
  stroke: #3f6488;
}
input[type="range"] {
  flex: 1;
  min-width: 0;
  height: 12px;
  appearance: none;
  background: linear-gradient(#8f8775, #f4f0e6) center / 100% 2px no-repeat;
}
input[type="range"]::-webkit-slider-thumb {
  width: 8px;
  height: 9px;
  border: 1px solid #26394a;
  border-radius: 4px;
  background: #5d7d96;
  appearance: none;
}
.taskbar {
  display: flex;
  align-items: center;
  flex: none;
  height: 29px;
  padding-right: 5px;
  background: linear-gradient(#6a6159 0, #9a9088 1px, #7d736b 3px, #4d453f 13px, #1a1511 15px, #0e0a08);
  color: #f4f2ee;
}
.start {
  width: 59px;
  height: 25px;
  padding-left: 15px;
  border: 1px solid #6c645d;
  border-left: 0;
  border-radius: 0 12px 12px 0;
  background: linear-gradient(#4a433d, #14100d 50%, #0a0807);
}
.start svg {
  display: block;
  width: 20px;
  height: 18px;
}
.quick {
  display: flex;
  margin: 0 8px 0 15px;
}
.timer {
  display: flex;
  align-items: center;
  width: 144px;
  height: 23px;
  margin-right: 6px;
  padding-right: 3px;
  border: 1px solid #8e9446;
  border-radius: 3px;
  background: #c4d3f3;
  color: #767b20;
}
.timer span {
  flex: 1;
  text-align: center;
}
.timer b {
  width: 13px;
  height: 14px;
  border: 1px solid #222;
  background: #fffbd0;
  color: #111;
  font-size: 12px;
  line-height: 12px;
  text-align: center;
}
.task {
  display: flex;
  align-items: center;
  width: 128px;
  height: 25px;
  margin-right: 4px;
  padding: 0 2px;
  border: 1px solid #776e66;
  border-radius: 3px;
  background: linear-gradient(#8a8179, #524a44 12px, #1c1713 13px, #2c2723);
  text-align: left;
  white-space: nowrap;
  overflow: hidden;
}
.task.active {
  border-color: #0a0807;
  background: linear-gradient(#3a332d, #14100d);
}
.tray {
  display: flex;
  align-items: center;
  gap: 2px;
  margin-left: auto;
}
.tray .ic {
  margin-bottom: 4px;
}
.chev {
  width: 8px;
  height: 10px;
  margin-right: 6px;
}
.chev svg {
  display: block;
}
.tray time {
  margin-left: 2px;
}
</style>
